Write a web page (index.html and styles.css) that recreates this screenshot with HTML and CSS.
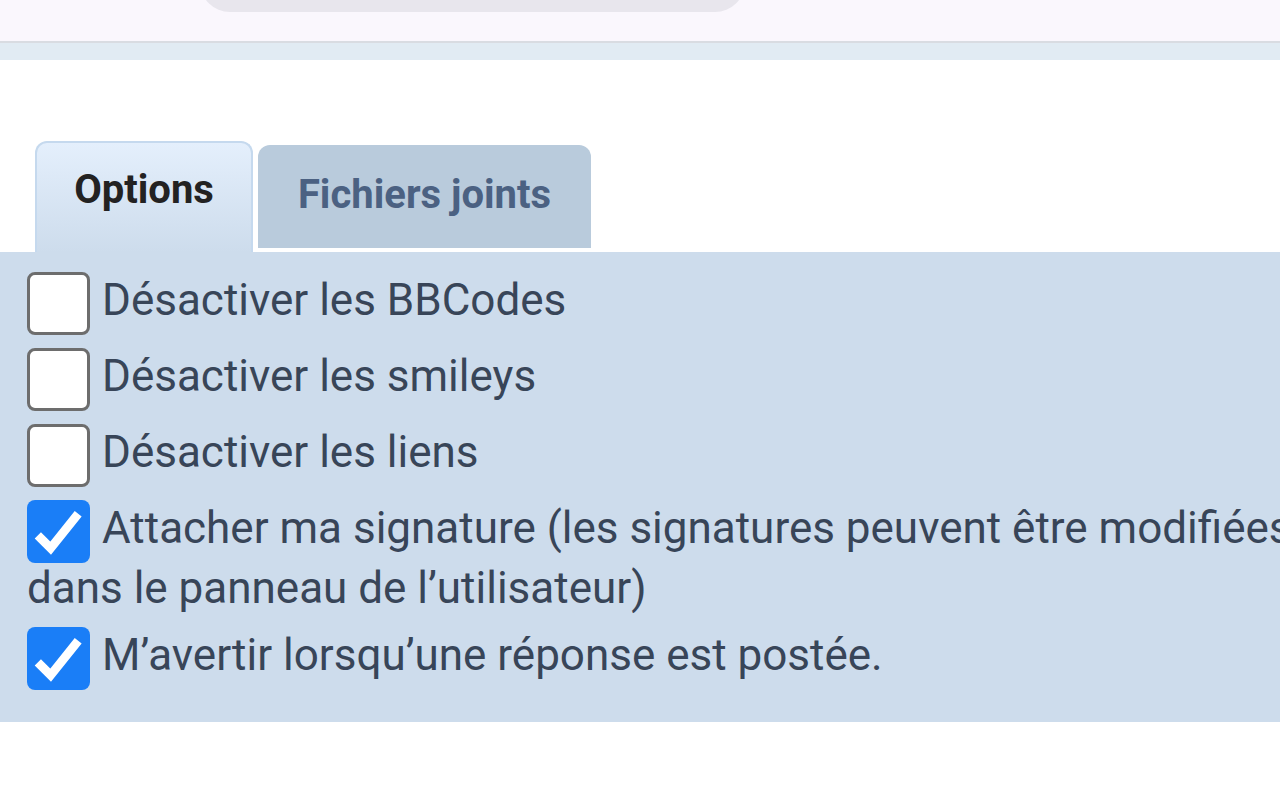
FILE: index.html
```html
<!DOCTYPE html>
<html lang="fr">
<head>
    <meta charset="UTF-8">
    <meta name="viewport" content="width=device-width, initial-scale=1.0">
    <title>Options du message</title>
    <link rel="stylesheet" href="styles.css">
</head>
<body>
    <div class="topbar">
        <div class="search"></div>
    </div>
    <div class="band"></div>

    <div class="editor">
        <div class="tabs">
            <div class="tab active">Options</div>
            <div class="tab">Fichiers joints</div>
        </div>

        <div class="panel">
            <label class="option">
                <span class="box"></span>Désactiver les BBCodes
            </label>
            <label class="option">
                <span class="box"></span>Désactiver les smileys
            </label>
            <label class="option">
                <span class="box"></span>Désactiver les liens
            </label>
            <label class="option">
                <span class="box checked">
                    <svg viewBox="0 0 64 64"><path d="M11 36 L24 49 L52 14"/></svg>
                </span>Attacher ma signature (les signatures peuvent être modifiées dans le panneau de l’utilisateur)
            </label>
            <label class="option">
                <span class="box checked">
                    <svg viewBox="0 0 64 64"><path d="M11 36 L24 49 L52 14"/></svg>
                </span>M’avertir lorsqu’une réponse est postée.
            </label>
        </div>
    </div>
</body>
</html>
```

FILE: styles.css
```css
body {
    margin: 0;
    overflow: hidden;
    font-family: Roboto, "Noto Sans", Arial, sans-serif;
    background-color: #fff;
    color: #384558;
}
.topbar {
    height: 41px;
    background-color: #faf7fd;
    border-bottom: 2px solid #d9dce2;
    overflow: hidden;
}
.search {
    width: 545px;
    height: 60px;
    margin: -48px 0 0 200px;
    border-radius: 44px;
    background-color: #e8e6ed;
}
.band {
    height: 17px;
    background-color: #e1ebf3;
}
.editor {
    padding-top: 81px;
}
.tabs {
    display: flex;
    align-items: flex-end;
    gap: 5px;
    padding-left: 35px;
}
.tab {
    box-sizing: border-box;
    width: 333px;
    height: 103px;
    margin-bottom: 4px;
    padding-top: 30px;
    border-radius: 12px 12px 0 0;
    background-color: #b9cbdc;
    color: #4b6182;
    font-size: 40px;
    font-weight: 700;
    line-height: 40px;
    text-align: center;
}
.tab.active {
    width: 218px;
    height: 111px;
    margin-bottom: 0;
    padding-top: 27px;
    border: 2px solid #c5d9ee;
    border-bottom: none;
    background: linear-gradient(#e4effc, #cddcec);
    color: #232222;
}
.panel {
    box-sizing: border-box;
    width: 1340px;
    padding: 20px 27px 32px;
    background-color: #cddcec;
}
.option {
    display: block;
    margin-bottom: 13px;
    font-size: 44px;
    line-height: 51px;
}
.option:last-child {
    margin-bottom: 0;
}
.box {
    box-sizing: border-box;
    display: inline-block;
    width: 63px;
    height: 63px;
    margin-right: 12px;
    vertical-align: middle;
    border: 3px solid #6d6d6d;
    border-radius: 8px;
    background-color: #fff;
}
.box.checked {
    border: none;
    background-color: #1a7ef7;
}
.box svg {
    display: block;
    width: 63px;
    height: 63px;
}
.box path {
    fill: none;
    stroke: #fff;
    stroke-width: 9;
}
```
